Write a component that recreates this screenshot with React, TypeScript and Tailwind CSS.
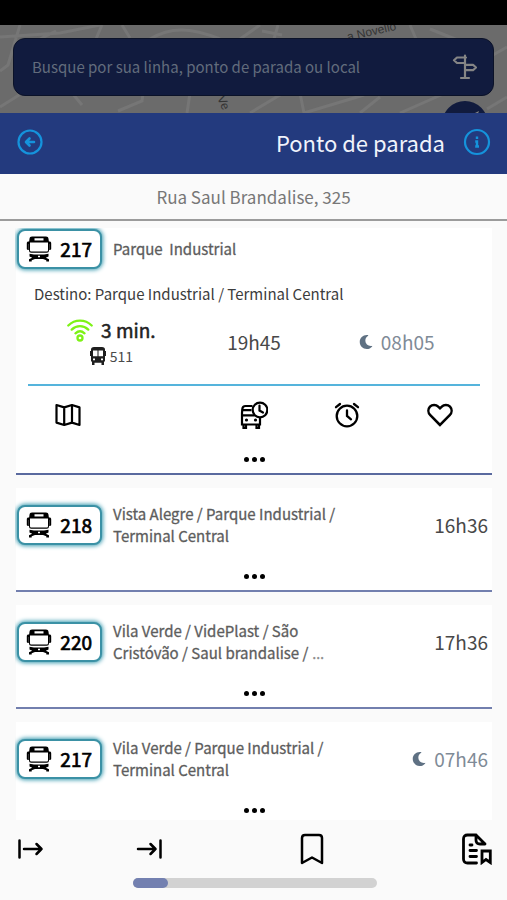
import type { ReactNode } from 'react'
import { FaMoon } from 'react-icons/fa'

type Line = {
  id: number
  code: string
  name: string
  time: string
  more?: boolean
  night?: boolean
}

const lines: Line[] = [
  { id: 1, code: '218', name: 'Vista Alegre / Parque Industrial / Terminal Central', time: '16h36' },
  { id: 2, code: '220', name: 'Vila Verde / VidePlast / São Cristóvão / Saul brandalise /', time: '17h36', more: true },
  { id: 3, code: '217', name: 'Vila Verde / Parque Industrial / Terminal Central', time: '07h46', night: true },
]

function BusFrontIcon() {
  return (
    <svg viewBox="0 0 26 26" className="h-[26px] w-[26px] shrink-0" fill="currentColor" aria-hidden="true">
      <path
        fillRule="evenodd"
        d="M6 .5h14c1.500 0 2.300.8 2.500 2.200L23 6.500v7.800c0 1.700-.9 2.500-2.300 2.500H5.300C3.900 16.800 3 16 3 14.300V6.500l.5-3.800C3.700 1.300 4.500.5 6 .5ZM8.500 2.300v2.200h9V2.300h-9ZM4 6.500v7.600c0 1 .5 1.500 1.500 1.500h15c1 0 1.500-.5 1.500-1.500V6.500H4Z"
      />
      <path d="M.8 7.200C.8 6.100 1.500 5.500 2.500 5.500H4V8H2.800v6H2c-.8 0-1.200-.5-1.200-1.200V7.200ZM25.200 7.200c0-1.100-.7-1.700-1.700-1.700H22V8h1.200v6h.8c.8 0 1.200-.5 1.200-1.200V7.200Z" />
      <path
        fillRule="evenodd"
        d="M3.500 17.800 8 18.600h10l4.500-.8v2.700l-2.700 1.200 3.200 1.500v2.300h-2.700v-1.200l-3.300-1.200H9l-3.300 1.200v1.200H3v-2.300l3.200-1.500-2.700-1.200v-2.700Zm8.500 2v1.500h2v-1.500h-2Z"
      />
    </svg>
  )
}

function VehicleIcon() {
  return (
    <svg viewBox="0 0 16 18" className="h-[18px] w-4 text-[#1f1f1f]" fill="currentColor" aria-hidden="true">
      <path
        fillRule="evenodd"
        d="M4 0h8c2 0 3 1 3 2.500V4h1v5h-1v5.500h-1V18h-2.500v-2.200h-7V18H2v-3.500H1V9H0V4h1V2.500C1 1 2 0 4 0ZM3 3.500v5.700h4.500V3.500H3ZM8.500 3.500v5.700H13V3.500H8.500ZM3 11.500v1.800h2v-1.800H3Zm8 0v1.800h2v-1.800h-2Z"
      />
    </svg>
  )
}

function SignalIcon() {
  return (
    <svg viewBox="0 0 26 23" className="h-[23px] w-[26px]" fill="none" stroke="#7df216" strokeWidth="2.300" strokeLinecap="round" aria-hidden="true">
      <path d="M1.300 6.500C8 .1 18 .1 24.700 6.500M4.700 10.600c4.900-4.600 11.700-4.600 16.600 0M8.500 14.300c2.700-2.400 6.300-2.400 9 0" />
      <circle cx="13" cy="19" r="2.500" />
    </svg>
  )
}

function MapIcon() {
  return (
    <svg viewBox="0 0 26 24" className="h-6 w-[26px]" fill="none" stroke="currentColor" strokeWidth="2.200" strokeLinejoin="round" aria-hidden="true">
      <path d="M1.500 2 9.200 4.400 17 2l7.500 2.400V22L17 19.600 9.200 22 1.500 19.600V2ZM9.200 4.400V22M17 2v17.600" />
    </svg>
  )
}

function BusClockIcon() {
  return (
    <svg viewBox="0 0 28 28" className="h-7 w-7" fill="none" stroke="currentColor" strokeWidth="2.200" aria-hidden="true">
      <path d="M12.500 5H5.500C3.500 5 2.500 6 2.300 8L2 12v11.500h18V17M2.500 9.200h9M2 14.300h12.500" />
      <path d="M3.500 24v3h2.500v-3M16.500 24v3H19v-3" />
      <circle cx="20" cy="9" r="7.300" />
      <path d="M19.500 4.500v5l3.500 2" strokeLinecap="round" />
      <circle cx="6.500" cy="19" r="1.600" fill="currentColor" stroke="none" />
      <circle cx="15.500" cy="19" r="1.600" fill="currentColor" stroke="none" />
    </svg>
  )
}

function AlarmIcon() {
  return (
    <svg viewBox="0 0 26 26" className="h-[26px] w-[26px]" fill="none" stroke="currentColor" strokeWidth="2.300" strokeLinecap="round" aria-hidden="true">
      <circle cx="13" cy="14" r="10.300" />
      <path d="M13 8.500V14l4 3.300M2 5.200 6 2M24 5.200 20 2" />
    </svg>
  )
}

function HeartIcon() {
  return (
    <svg viewBox="0 0 26 24" className="h-6 w-[26px]" fill="none" stroke="currentColor" strokeWidth="2.500" aria-hidden="true">
      <path d="M13 22 3.300 12.200C.8 9.600.8 6 3 3.600c2.300-2.300 6-2.200 8.200.1L13 5.400l1.800-1.700c2.200-2.300 5.900-2.400 8.200-.1 2.200 2.400 2.200 6-.3 8.600L13 22Z" />
    </svg>
  )
}

function SignpostIcon() {
  return (
    <svg viewBox="0 0 26 26" className="h-[26px] w-[26px]" fill="none" stroke="currentColor" strokeWidth="2.200" strokeLinecap="round" strokeLinejoin="round" aria-hidden="true">
      <path d="M14 1.500v22.300M10 24h8M15 3.500H6L3 6.300 6 9h8M14 10.800h8l3 2.700-3 2.700h-8" />
    </svg>
  )
}

function DepartIcon() {
  return (
    <svg viewBox="0 0 26 20" className="h-5 w-[26px]" fill="none" stroke="currentColor" strokeWidth="2.500" strokeLinecap="round" strokeLinejoin="round" aria-hidden="true">
      <path d="M1.500 1.500v17M6 10h17.500M18.500 5l5 5-5 5" />
    </svg>
  )
}

function ArriveIcon() {
  return (
    <svg viewBox="0 0 26 20" className="h-5 w-[26px]" fill="none" stroke="currentColor" strokeWidth="2.500" strokeLinecap="round" strokeLinejoin="round" aria-hidden="true">
      <path d="M24.500 1.500v17M2 10h17.500M14.500 5l5 5-5 5" />
    </svg>
  )
}

function BookmarkIcon() {
  return (
    <svg viewBox="0 0 24 32" className="h-8 w-6" fill="none" stroke="currentColor" strokeWidth="2.500" strokeLinejoin="round" aria-hidden="true">
      <path d="M2 30V5c0-2 1-3 3-3h14c2 0 3 1 3 3v25l-10-5.500L2 30Z" />
    </svg>
  )
}

function ReportIcon() {
  return (
    <svg viewBox="0 0 30 32" className="h-8 w-[30px]" fill="none" stroke="currentColor" strokeWidth="2.800" strokeLinecap="round" strokeLinejoin="round" aria-hidden="true">
      <path d="M14.500 30H5.500c-2.500 0-4-1.500-4-4V6c0-2.500 1.500-4 4-4H14l9 9M14 2v5c0 2.500 1.500 4 4 4h5" />
      <path d="M8 12h2M8 17.500h6.500M8 23.500h6.500" />
      <path d="M20 29.500V18h8.300v11.500L24 26.500l-4 3Z" strokeLinejoin="miter" />
    </svg>
  )
}

function MapBackdrop() {
  return (
    <svg viewBox="0 0 507 88" preserveAspectRatio="xMidYMid slice" className="absolute inset-0 h-full w-full" aria-hidden="true">
      <rect width="507" height="88" fill="#6b6b6b" />
      <g fill="none" stroke="#767676" strokeWidth="3">
        <path d="M20 0 8 40l-8 6M0 12l60-4 40-8M40 14l16-8M102 0l-6 14M122 0l8 13M150 14c20-12 40-12 70 0M0 82l35-22M72 68l10 12M118 86l24-10 2-14M190 68l-3 20M240 14l20-14M262 6l20 4M278 0l-4 14M410 0l6 14M430 4l30 12M507 22l-14 8M300 68l4 20 60-18M380 72l-20 16M250 88l30-18M400 88l50-22M507 72l-20 12" />
      </g>
      <g fill="#343434" fontFamily="Liberation Sans, sans-serif" fontSize="12">
        <text transform="translate(348 16) rotate(-13)">a Novello</text>
        <text transform="translate(217 73) rotate(65)">Ve</text>
      </g>
    </svg>
  )
}

function Badge({ code }: { code: string }) {
  return (
    <a
      href={`#linha-${code}`}
      className="flex h-10 w-[85px] shrink-0 items-center justify-between rounded-lg border-2 border-[#3b91a5] bg-white pr-2 pl-[7px] text-black shadow-[0_0_4px_1px_#3b9bb0]"
    >
      <BusFrontIcon />
      <span className="text-[19px] leading-6 [-webkit-text-stroke:0.7px]">{code}</span>
    </a>
  )
}

function Dots() {
  return (
    <button type="button" aria-label="Mais opções" className="mx-auto flex h-4 items-center gap-[3px]">
      <span className="h-[5px] w-[5px] rounded-full bg-black" />
      <span className="h-[5px] w-[5px] rounded-full bg-black" />
      <span className="h-[5px] w-[5px] rounded-full bg-black" />
    </button>
  )
}

function IconButton({ label, className = '', children }: { label: string; className?: string; children: ReactNode }) {
  return (
    <button type="button" aria-label={label} className={`flex items-center justify-center ${className}`}>
      {children}
    </button>
  )
}

function Time({ value, night }: { value: string; night?: boolean }) {
  return (
    <span className={`flex items-center gap-2 text-[19px] leading-6 ${night ? 'text-[#7f8b97]' : 'text-[#484848]'}`}>
      {night && <FaMoon className="h-[14px] w-[14px] text-[#5f7183]" />}
      {value}
    </span>
  )
}

function LineCard({ line }: { line: Line }) {
  return (
    <li className="border-b-2 border-[#727fae] bg-white pt-4 pb-1.5">
      <div className="flex h-[42px] items-center pr-1 pl-px">
        <Badge code={line.code} />
        <p className="ml-[11px] w-[232px] text-[15px] leading-[22px] text-[#5d5d5d] [-webkit-text-stroke:0.3px]">
          {line.name}
          {line.more && <span className="font-['Noto_Sans',sans-serif] text-[#8a8a8a]"> …</span>}
        </p>
        <div className="ml-auto">
          <Time value={line.time} night={line.night} />
        </div>
      </div>
      <div className="mt-[22px]">
        <Dots />
      </div>
    </li>
  )
}

export default function App() {
  return (
    <div className="flex h-screen flex-col bg-[#fafafa] font-['Noto_Sans_CJK_SC','Noto_Sans',sans-serif]">
      <div className="h-[25px] shrink-0 bg-black" />

      <div className="relative h-[88px] shrink-0 overflow-hidden px-[13px] pt-[13px]">
        <MapBackdrop />
        <div className="relative flex h-[58px] items-center rounded-xl border border-[#0b1228] bg-[#111b3e] pr-4 pl-[18px]">
          <input
            type="text"
            aria-label="Busca"
            placeholder="Busque por sua linha, ponto de parada ou local"
            className="min-w-0 flex-1 bg-transparent text-[15px] leading-6 text-[#8b919e] outline-none placeholder:text-[#626c7c]"
          />
          <button type="button" aria-label="Rotas" className="text-[#858585]">
            <SignpostIcon />
          </button>
        </div>
        <button type="button" aria-label="Minha localização" className="absolute top-[76px] right-[19px] flex h-[46px] w-[46px] justify-center rounded-full bg-[#111b3e] pt-2 pl-4 text-[#858585]">
          <svg viewBox="0 0 20 20" className="h-5 w-5" fill="currentColor" aria-hidden="true">
            <path d="M16 2 2 9l6 2 2 6 6-15Z" />
          </svg>
        </button>
      </div>

      <header className="flex h-[61px] shrink-0 items-center bg-[#233a7e] px-4 pb-1 text-[#1593dc]">
        <IconButton label="Voltar" className="h-7 w-7">
          <svg viewBox="0 -1 28 28" className="h-7 w-7" fill="none" stroke="currentColor" strokeWidth="2.200" strokeLinecap="round" strokeLinejoin="round" aria-hidden="true">
            <circle cx="14" cy="13" r="11.500" />
            <path d="M18 13h-7.500M13.500 9.500 10 13l3.500 3.500" strokeWidth="2.600" />
          </svg>
        </IconButton>
        <h1 className="ml-auto text-[22px] leading-8 text-[#f0f3fb]">Ponto de parada</h1>
        <IconButton label="Informações" className="ml-[18px] h-7 w-7">
          <svg viewBox="0 -1 28 28" className="h-7 w-7" fill="none" stroke="currentColor" strokeWidth="2.200" aria-hidden="true">
            <circle cx="14" cy="13" r="12" />
            <path d="M14 7.500v2.600M12.200 12.500H14v5M12.200 17.500h3.800" strokeWidth="2.400" />
          </svg>
        </IconButton>
      </header>

      <p className="flex h-[47px] shrink-0 items-center justify-center border-b-2 border-[#9b9b9b] text-[17px] leading-6 text-[#777]">
        Rua Saul Brandalise, 325
      </p>

      <ul className="mx-[15px] mt-[7px] flex min-h-0 flex-1 flex-col gap-[13px] overflow-hidden pl-px">
        <li className="shrink-0 border-b-2 border-[#5a6a9f] bg-white pb-1.5">
          <div className="flex h-[42px] items-center pl-px">
            <Badge code="217" />
            <p className="ml-[11px] text-[15px] leading-[22px] text-[#5d5d5d] [-webkit-text-stroke:0.3px]">Parque&nbsp; Industrial</p>
          </div>
          <p className="mt-[13px] ml-[18px] text-[15px] leading-[22px] text-[#3c3c3c]">
            Destino: Parque Industrial / Terminal Central
          </p>

          <div className="mx-3 grid grid-cols-3 items-center border-b-2 border-[#55b4dc] px-3 pt-[11px] pb-4">
            <div className="flex flex-col items-center">
              <div className="flex items-center gap-2 text-[19px] leading-7 text-[#222] [-webkit-text-stroke:0.5px]">
                <SignalIcon />
                3 min.
              </div>
              <div className="flex items-center gap-1 text-[14px] leading-6 text-[#4a4a4a]">
                <VehicleIcon />
                511
              </div>
            </div>
            <div className="flex justify-center">
              <Time value="19h45" />
            </div>
            <div className="flex justify-center">
              <Time value="08h05" night />
            </div>
          </div>

          <div className="grid grid-cols-5 px-1.5 pt-[13px] pb-5 text-black">
            <IconButton label="Ver no mapa" className="h-8">
              <MapIcon />
            </IconButton>
            <IconButton label="Horários" className="col-start-3 h-8">
              <BusClockIcon />
            </IconButton>
            <IconButton label="Criar alarme" className="h-8">
              <AlarmIcon />
            </IconButton>
            <IconButton label="Favoritar" className="h-8">
              <HeartIcon />
            </IconButton>
          </div>
          <Dots />
        </li>

        {lines.map((line) => (
          <LineCard key={line.id} line={line} />
        ))}
      </ul>

      <footer className="shrink-0 pt-3 pr-[15px] pb-3 pl-[18px]">
        <nav className="flex h-[34px] items-center text-black">
          <IconButton label="Partidas">
            <DepartIcon />
          </IconButton>
          <div className="grow-[2]" />
          <IconButton label="Chegadas">
            <ArriveIcon />
          </IconButton>
          <div className="grow-[3]" />
          <IconButton label="Salvar">
            <BookmarkIcon />
          </IconButton>
          <div className="grow-[3]" />
          <IconButton label="Relatório">
            <ReportIcon />
          </IconButton>
        </nav>
        <div className="mx-auto mt-3 h-[10px] w-[244px] rounded-full bg-[#d2d2d2]">
          <div className="h-full w-[35px] rounded-full bg-[#7380b0]" />
        </div>
      </footer>
    </div>
  )
}
